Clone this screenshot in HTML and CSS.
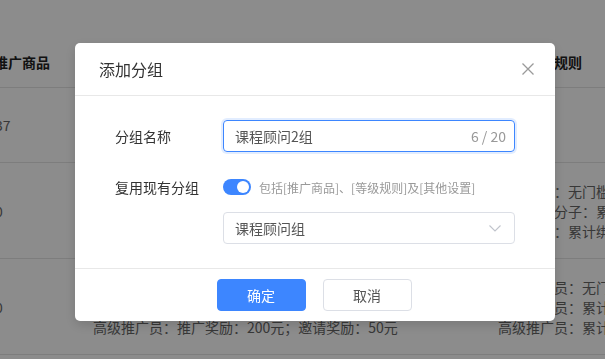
FILE: index.html
```html
<!DOCTYPE html>
<html>
<head>
    <title>推广分组</title>
    <meta charset="UTF-8">
<link rel="stylesheet" href="styles.css">
</head>
<body>
    <!-- table behind the dialog -->
    <div class="table">
        <div class="row head">
            <div class="cell">推广商品</div>
            <div class="cell">推广奖励</div>
            <div class="cell rule-head">等级规则</div>
        </div>
        <div class="row r1">
            <div class="cell num">37</div>
            <div class="cell"></div>
            <div class="cell"></div>
        </div>
        <div class="row r2">
            <div class="cell num">0</div>
            <div class="cell">
                <p>初级推广员：推广奖励：100元；邀请奖励：20元</p>
                <p>中级推广员：推广奖励：150元；邀请奖励：30元</p>
                <p>高级推广员：推广奖励：200元；邀请奖励：50元</p>
            </div>
            <div class="cell">
                <p>普通成员：无门槛</p>
                <p>活跃积极分子：累计推广10人</p>
                <p>核心成员：累计绑定50人</p>
            </div>
        </div>
        <div class="row r3">
            <div class="cell num">0</div>
            <div class="cell">
                <p>初级推广员：推广奖励：100元；邀请奖励：20元</p>
                <p>中级推广员：推广奖励：150元；邀请奖励：30元</p>
                <p>高级推广员：推广奖励：200元；邀请奖励：50元</p>
            </div>
            <div class="cell">
                <p>初级推广员：无门槛</p>
                <p>中级推广员：累计推广10人</p>
                <p>高级推广员：累计推广50人</p>
            </div>
        </div>
    </div>

    <!-- dialog -->
    <div class="mask">
        <div class="dialog">
            <div class="dialog-header">
                <span class="dialog-title">添加分组</span>
                <svg class="close" width="12" height="12" viewBox="0 0 12 12">
                    <path d="M0.5 0.5 L11.5 11.5 M11.5 0.5 L0.5 11.5" stroke="#9a9a9a" stroke-width="1.3" fill="none"/>
                </svg>
            </div>
            <div class="dialog-body">
                <div class="form-item">
                    <label class="form-label">分组名称</label>
                    <div class="input focus">
                        <span class="input-text">课程顾问2组</span>
                        <span class="count">6 / 20</span>
                    </div>
                </div>
                <div class="form-item switch-row">
                    <label class="form-label">复用现有分组</label>
                    <div class="switch-wrap">
                        <span class="switch"><span class="knob"></span></span>
                        <span class="hint">包括[推广商品]、[等级规则]及[其他设置]</span>
                    </div>
                </div>
                <div class="form-item select-row">
                    <label class="form-label"></label>
                    <div class="input select">
                        <span class="input-text">课程顾问组</span>
                        <svg width="12" height="7" viewBox="0 0 12 7">
                            <path d="M0.5 0.5 L6 6 L11.5 0.5" stroke="#c0c4cc" stroke-width="1.1" fill="none"/>
                        </svg>
                    </div>
                </div>
            </div>
            <div class="dialog-footer">
                <button class="btn primary">确定</button>
                <button class="btn">取消</button>
            </div>
        </div>
    </div>
</body>
</html>
```

FILE: styles.css
```css
* {
  box-sizing: border-box;
}

body {
  margin: 0;
  background-color: #fff;
  font-family: "Noto Sans CJK SC", "Noto Sans", sans-serif;
  font-size: 14px;
  color: #666;
  overflow: hidden;
}

p {
  margin: 0;
}

/* Background table */
.table {
  margin-left: -6px;
  padding-top: 37px;
  width: 640px;
}

.row {
  display: grid;
  grid-template-columns: 99px 405px 1fr;
  align-items: center;
  border-bottom: 1px solid #e4e4e4;
  white-space: nowrap;
}

.row .cell p {
  line-height: 20px;
}

.num {
  padding-left: 1px;
}

.head {
  height: 51px;
  font-weight: bold;
  color: #222;
}

.rule-head {
  padding-left: 28px;
}

.r1 {
  height: 75px;
}

.r2,
.r3 {
  height: 96px;
}

/* Mask + dialog */
.mask {
  position: fixed;
  top: 0;
  left: 0;
  right: 0;
  bottom: 0;
  background-color: rgba(0, 0, 0, 0.45);
  padding: 43px 0 0 75px;
}

.dialog {
  width: 480px;
  background-color: #fff;
  border-radius: 5px;
  box-shadow: 0 4px 12px rgba(0, 0, 0, 0.15);
}

.dialog-header {
  height: 53px;
  display: flex;
  align-items: center;
  justify-content: space-between;
  padding: 0 21px 0 24px;
  border-bottom: 1px solid #e8e8e8;
}

.dialog-title {
  font-size: 16px;
  color: #333;
}

.dialog-body {
  padding: 24px 40px 24px 40px;
}

.form-item {
  display: flex;
  align-items: center;
}

.form-label {
  width: 108px;
  flex-shrink: 0;
  color: #333;
}

.switch-row {
  margin-top: 24px;
  height: 22px;
}

.select-row {
  margin-top: 14px;
}

.input {
  flex: 1;
  height: 32px;
  border: 1px solid #dcdfe6;
  border-radius: 4px;
  display: flex;
  align-items: center;
  justify-content: space-between;
  padding: 0 8px 0 11px;
}

.input.focus {
  border-color: #3d86ff;
  box-shadow: 0 0 0 2px rgba(61, 134, 255, 0.15);
}

.input-text {
  color: #555;
}

.count {
  color: #999;
}

.select {
  padding-right: 13px;
}

.switch-wrap {
  display: flex;
  align-items: center;
}

.switch {
  width: 28px;
  height: 16px;
  border-radius: 8px;
  background-color: #3d86ff;
  display: flex;
  align-items: center;
  justify-content: flex-end;
  padding-right: 2px;
}

.knob {
  width: 12px;
  height: 12px;
  border-radius: 50%;
  background-color: #fff;
}

.hint {
  margin-left: 8px;
  font-size: 12px;
  color: #999;
}

.dialog-footer {
  border-top: 1px solid #e8e8e8;
  padding: 10px 2px 10px 0;
  display: flex;
  justify-content: center;
  gap: 17px;
}

.btn {
  width: 89px;
  height: 32px;
  border-radius: 4px;
  border: 1px solid #dcdfe6;
  background-color: #fff;
  color: #555;
  font-family: inherit;
  font-size: 14px;
}

.btn.primary {
  background-color: #3d86ff;
  border-color: #3d86ff;
  color: #fff;
}
```
